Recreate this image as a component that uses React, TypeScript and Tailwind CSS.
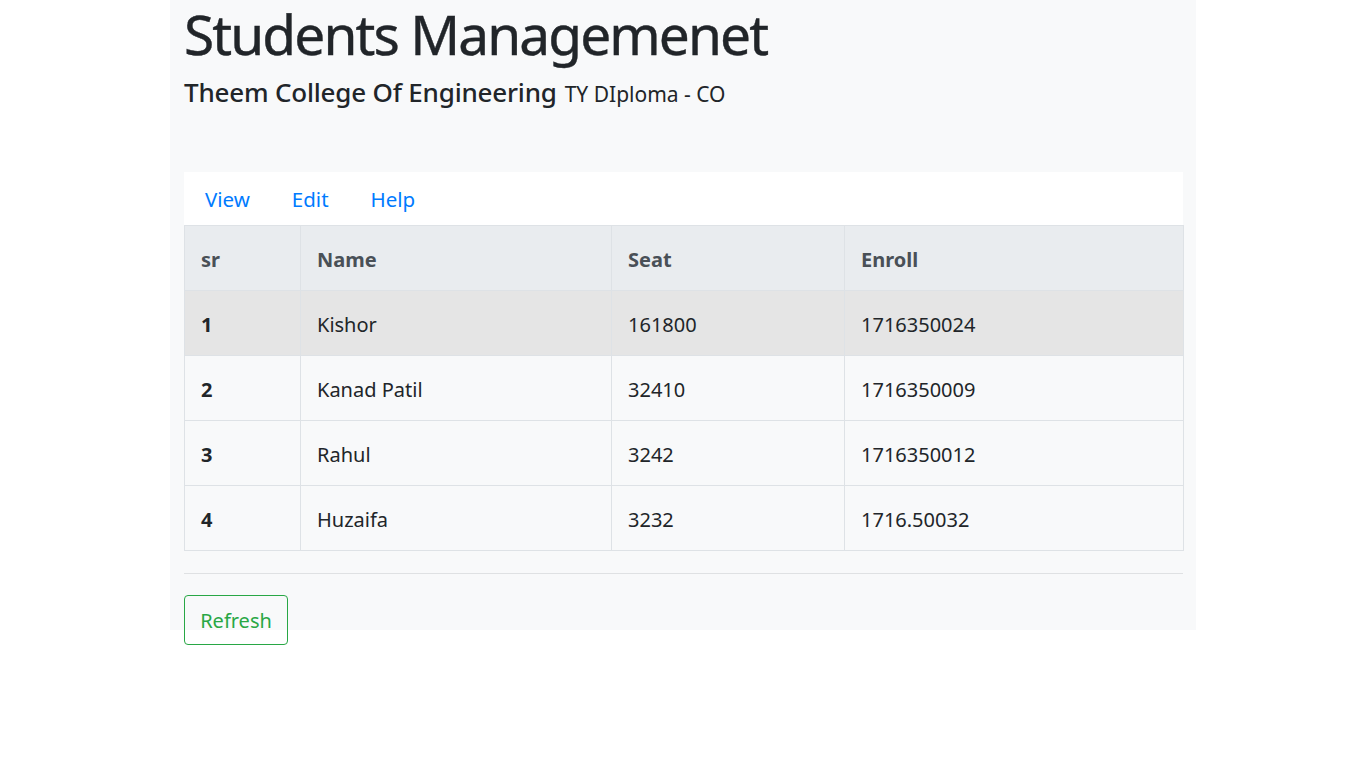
import React from "react";

const rows = [
  { sr: "1", name: "Kishor", seat: "161800", enroll: "1716350024", hl: true },
  { sr: "2", name: "Kanad Patil", seat: "32410", enroll: "1716350009" },
  { sr: "3", name: "Rahul", seat: "3242", enroll: "1716350012" },
  { sr: "4", name: "Huzaifa", seat: "3232", enroll: "1716.50032" },
];

export default function App() {
  return (
    <div className="min-h-[768px] bg-white" style={{ fontFamily: '"Noto Sans", "Open Sans", sans-serif' }}>
      <div className="ml-[170px] w-[1026px] h-[630px] bg-[#f8f9fa] pl-[14px] pr-[13px] text-[#212529]">
        <h1 className="text-[55px] leading-[67px] font-normal m-0 pt-0 tracking-[-1.9px] [-webkit-text-stroke:0.4px_#212529]">Students Managemenet</h1>
        <div className="mt-[7px] leading-[36px] whitespace-nowrap">
          <span className="text-[26px] font-medium tracking-[-0.2px]">Theem College Of Engineering</span>
          <span className="ml-[8px] text-[21px]">TY DIploma - CO</span>
        </div>
        <div className="mt-[58px] bg-white h-[53px] flex items-center pt-[2px]">
          <a className="px-[21px] text-[20.5px] text-[#007bff]">View</a>
          <a className="px-[21px] text-[20.5px] text-[#007bff]">Edit</a>
          <a className="px-[21px] text-[20.5px] text-[#007bff]">Help</a>
        </div>
        <table className="w-[999px] border-collapse text-[20px] table-fixed">
          <colgroup>
            <col className="w-[116px]" />
            <col className="w-[311px]" />
            <col className="w-[233px]" />
            <col className="w-[339px]" />
          </colgroup>
          <thead>
            <tr className="bg-[#e9ecef] text-[#495057] h-[65px]">
              {["sr", "Name", "Seat", "Enroll"].map((h) => (
                <th key={h} className="border border-[#dee2e6] text-left font-bold px-[16px] pt-[3px]">{h}</th>
              ))}
            </tr>
          </thead>
          <tbody>
            {rows.map((r) => (
              <tr key={r.sr} className={(r.hl ? "bg-[#e5e5e5]" : "") + " h-[65px]"}>
                <td className="border border-[#dee2e6] px-[16px] pt-[3px] font-bold">{r.sr}</td>
                <td className="border border-[#dee2e6] px-[16px] pt-[3px]">{r.name}</td>
                <td className="border border-[#dee2e6] px-[16px] pt-[3px]">{r.seat}</td>
                <td className="border border-[#dee2e6] px-[16px] pt-[3px]">{r.enroll}</td>
              </tr>
            ))}
          </tbody>
        </table>
        <hr className="mt-[22px] border-0 border-t border-[#dfe1e3] w-[999px]" />
        <button className="mt-[21px] h-[50px] w-[104px] border border-[#28a745] text-[#28a745] rounded-[4px] text-[20px] bg-transparent pt-[2px]">
          Refresh
        </button>
      </div>
    </div>
  );
}
